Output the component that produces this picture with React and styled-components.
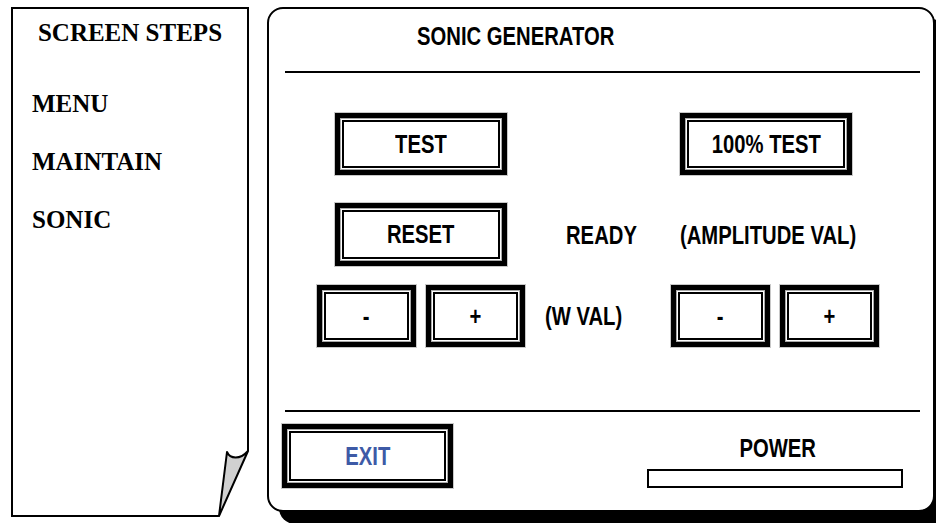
import React from 'react';
import styled, { createGlobalStyle } from 'styled-components';

/* Global */
const GlobalStyle = createGlobalStyle`
  html, body {
    margin: 0;
    padding: 0;
    background: #fff;
    overflow: hidden;
  }
  body {
    font-family: "Liberation Sans", Arial, sans-serif;
    color: #000;
  }
`;

const Screen = styled.div`
  display: flex;
  align-items: flex-start;
  gap: 18px;
  width: 936px;
  height: 523px;
  padding: 7px 0 0 11px;
  box-sizing: border-box;
`;

/* Left: screen steps page */
const StepsPanel = styled.aside`
  position: relative;
  box-sizing: border-box;
  width: 238px;
  height: 510px;
  padding-top: 10px;
  border: 2px solid #000;
  font-family: "Liberation Serif", "Times New Roman", serif;
  font-weight: bold;
  font-size: 25px;
  line-height: 28px;
`;

const StepsTitle = styled.h2`
  margin: 0;
  font: inherit;
  text-align: center;
`;

const StepList = styled.ul`
  display: flex;
  flex-direction: column;
  gap: 30px;
  margin: 43px 0 0;
  padding: 0 0 0 19px;
  list-style: none;
`;

const Curl = styled.svg`
  position: absolute;
  right: -5px;
  bottom: -5px;
  width: 46px;
  height: 80px;
`;

/* Right: sonic generator */
const Generator = styled.section`
  box-sizing: border-box;
  width: 668px;
  height: 505px;
  display: flex;
  flex-direction: column;
  border: 2px solid #000;
  border-radius: 16px;
  background: #fff;
  box-shadow: 12px 12px 0 #000;
  font-weight: bold;
  font-size: 25px;
`;

/* the panel uses a narrow grotesque; squeeze Liberation Sans to its width */
const Narrow = styled.span`
  display: inline-block;
  line-height: 28px;
  white-space: nowrap;
  transform: scaleX(0.81);
  transform-origin: ${p => p.$origin || 'center'};
`;

const Header = styled.header`
  box-sizing: border-box;
  height: 62px;
  display: flex;
  align-items: center;
  padding: 0 0 8px 148px;
`;

const Rule = styled.div`
  flex-shrink: 0;
  height: 2px;
  margin: 0 13px 0 16px;
  background: #000;
`;

const Body = styled.div`
  flex: 1;
  display: flex;
  flex-direction: column;
  padding: 40px 0 0 48px;
`;

const Row = styled.div`
  display: grid;
  grid-template-columns: 208px 146px 208px;
  align-items: center;
  height: ${p => p.$h}px;
  margin-top: ${p => p.$top || 0}px;
`;

const Slot = styled.div`
  display: flex;
  align-items: center;
  justify-content: ${p => (p.$center ? 'center' : 'flex-start')};
  gap: 10px;
  padding-left: ${p => p.$indent || 0}px;
`;

const Button = styled.button`
  box-sizing: border-box;
  width: ${p => p.$w}px;
  height: ${p => p.$h}px;
  padding: 0;
  border: 5px solid #000;
  background: #fff;
  box-shadow: inset 0 0 0 1px #a8a8a8, inset 0 0 0 2px #fff, inset 0 0 0 4px #000,
    0 0 0 1px #c8c8c8;
  font: inherit;
  color: ${p => p.$color || '#000'};
  cursor: pointer;
`;

const Footer = styled.footer`
  box-sizing: border-box;
  flex-shrink: 0;
  height: 98px;
  display: flex;
  align-items: flex-start;
  justify-content: space-between;
  padding: 12px 30px 0 13px;
`;

const PowerBox = styled.div`
  width: 256px;
  display: flex;
  flex-direction: column;
  align-items: center;
  gap: 7px;
  margin-top: 10px;
`;

const PowerLabel = styled(Narrow)`
  padding-left: 6px;
`;

const PowerBar = styled.div`
  box-sizing: border-box;
  width: 256px;
  height: 19px;
  border: 2px solid #000;
  background: #fff;
`;

const PageCurl = () => (
  <Curl viewBox="0 0 46 80">
    <polygon points="42,11 46,11 46,80 12,80 12,78 13,76" fill="#fff" />
    <path
      d="M21,12 C24,19 34,20 42,11 L13,76 Z"
      fill="#d0d0d0"
      stroke="#000"
      strokeWidth="2"
      strokeLinejoin="round"
    />
  </Curl>
);

const Key = ({ w, h, color, children }) => (
  <Button $w={w} $h={h} $color={color}>
    <Narrow>{children}</Narrow>
  </Button>
);

export default function App() {
  return (
    <>
      <GlobalStyle />
      <Screen>
        <StepsPanel>
          <StepsTitle>SCREEN STEPS</StepsTitle>
          <StepList>
            <li>MENU</li>
            <li>MAINTAIN</li>
            <li>SONIC</li>
          </StepList>
          <PageCurl />
        </StepsPanel>

        <Generator>
          <Header>
            <Narrow $origin="left">SONIC GENERATOR</Narrow>
          </Header>
          <Rule />
          <Body>
            <Row $h={62}>
              <Slot $center>
                <Key w={172} h={62}>TEST</Key>
              </Slot>
              <Slot />
              <Slot $indent={9}>
                <Key w={172} h={62}>100% TEST</Key>
              </Slot>
            </Row>
            <Row $h={63} $top={28}>
              <Slot $center>
                <Key w={172} h={63}>RESET</Key>
              </Slot>
              <Slot $indent={41}>
                <Narrow $origin="left">READY</Narrow>
              </Slot>
              <Slot $indent={9}>
                <Narrow $origin="left">(AMPLITUDE VAL)</Narrow>
              </Slot>
            </Row>
            <Row $h={62} $top={19}>
              <Slot>
                <Key w={99} h={62}>-</Key>
                <Key w={99} h={62}>+</Key>
              </Slot>
              <Slot $indent={20}>
                <Narrow $origin="left">(W VAL)</Narrow>
              </Slot>
              <Slot>
                <Key w={99} h={62}>-</Key>
                <Key w={99} h={62}>+</Key>
              </Slot>
            </Row>
          </Body>
          <Rule />
          <Footer>
            <Key w={171} h={64} color="#3d5aa6">EXIT</Key>
            <PowerBox>
              <PowerLabel>POWER</PowerLabel>
              <PowerBar />
            </PowerBox>
          </Footer>
        </Generator>
      </Screen>
    </>
  );
}
